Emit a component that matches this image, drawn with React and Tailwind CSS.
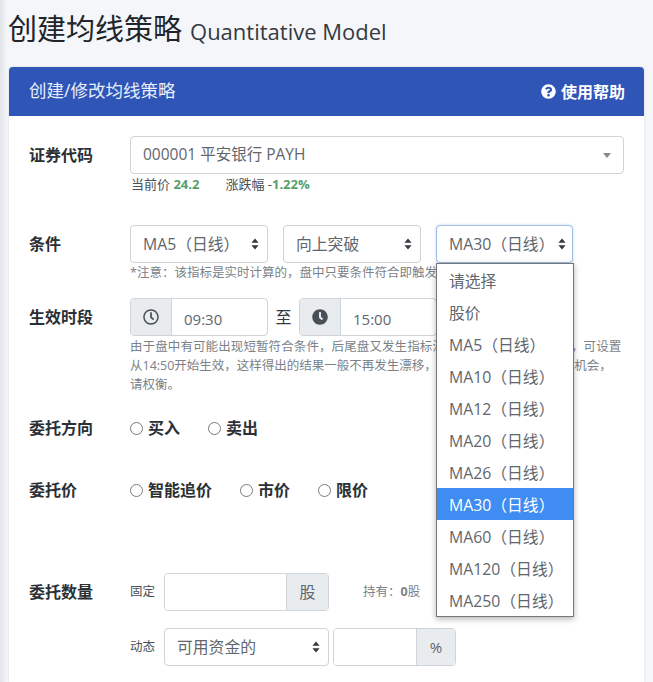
import React from "react";
import { FaRegClock, FaClock, FaQuestionCircle } from "react-icons/fa";

function Sort() {
  return (
    <svg width="8" height="12" viewBox="0 0 8 12" className="shrink-0">
      <path d="M4 0.5 L7.6 4.8 H0.4 Z M4 11.5 L7.6 7.2 H0.4 Z" fill="#343a40" />
    </svg>
  );
}
function Select({ className = "", children, focus }) {
  return (
    <div className={`h-[38px] flex items-center justify-between bg-white rounded-[4px] border text-[15.8px] text-[#5f666d] ${focus ? "border-[#9dbde8] shadow-[0_0_3px_rgba(90,150,230,0.35)] pl-3 pr-[6px]" : "border-[#ced4da] pl-3 pr-[8px]"} ${className}`}>
      <span className="whitespace-nowrap pt-[1px]">{children}</span>
      <Sort />
    </div>
  );
}
function Radio({ children, className = "" }) {
  return (
    <label className={`flex items-center text-[16px] font-bold text-[#2b3035] ${className}`}>
      <span className="w-[13px] h-[13px] rounded-full border border-[#7a7a7a] bg-white mr-[5px]" />
      <span>{children}</span>
    </label>
  );
}
function Label({ children, className = "" }) {
  return <div className={`w-[101px] shrink-0 text-[16px] font-bold text-[#2b3035] ${className}`}>{children}</div>;
}
const opts = ["请选择", "股价", "MA5（日线）", "MA10（日线）", "MA12（日线）", "MA20（日线）", "MA26（日线）", "MA30（日线）", "MA60（日线）", "MA120（日线）", "MA250（日线）"];

export default function App() {
  return (
    <div className="relative w-[653px] h-[682px] overflow-hidden bg-[linear-gradient(to_right,#e3e5e8_0px,#e8eaed_3px,#f4f6f9_7px)] pl-[9px] pr-[9px]" style={{ fontFamily: '"Open Sans","Noto Sans CJK SC",sans-serif' }}>
      <div className="h-[67px] flex items-baseline pt-[6px] text-[#212529] -ml-[1px] whitespace-nowrap">
        <span className="text-[29px] leading-[46px]">创建均线策略</span>
        <span className="text-[22px] ml-[8px] text-[#343a40]">Quantitative Model</span>
      </div>
      <div className="bg-white rounded-t-[4px] h-[615px] shadow-[0_0_2px_rgba(0,0,0,0.15)]">
        <div className="h-[49px] bg-[#2f55b7] rounded-t-[4px] flex items-center justify-between pl-[20px] pr-[19px] text-white">
          <span className="text-[17.5px] -mt-[3px] text-[#e8eefa]">创建/修改均线策略</span>
          <span className="flex items-center gap-[5px] text-[16px] font-bold">
            <FaQuestionCircle className="w-[15px] h-[15px]" />使用帮助
          </span>
        </div>
        <div className="pt-[20px] pl-[20px] pr-[20px]">
          <div className="flex items-start">
            <Label className="leading-[38px]">证券代码</Label>
            <div className="flex-1">
              <div className="h-[38px] flex items-center justify-between border border-[#ced4da] rounded-[4px] pl-3 pr-[12px] text-[15.5px] text-[#5f666d]">
                <span>000001 平安银行 PAYH</span>
                <span className="w-0 h-0 border-l-[4px] border-r-[4px] border-t-[5px] border-l-transparent border-r-transparent border-t-[#888]" />
              </div>
              <div className="text-[13px] leading-[18px] mt-[1px] pl-[1px] text-[#495057] flex">
                <span>当前价 <b className="text-[#5a9e6a]">24.2</b></span>
                <span className="ml-[26px]">涨跌幅 -<b className="text-[#5a9e6a]">1.22%</b></span>
              </div>
            </div>
          </div>

          <div className="flex items-start mt-[32px]">
            <Label className="leading-[38px]">条件</Label>
            <div className="flex-1">
              <div className="flex gap-[15px]">
                <Select className="w-[138px]">MA5（日线）</Select>
                <Select className="w-[138px]">向上突破</Select>
                <Select className="w-[137px]" focus>MA30（日线）</Select>
              </div>
              <div className="text-[12.5px] leading-[18px] mt-[1px] text-[#7b8288] whitespace-nowrap">*注意：该指标是实时计算的，盘中只要条件符合即触发交易</div>
            </div>
          </div>

          <div className="flex items-start mt-[16px]">
            <Label className="leading-[38px]">生效时段</Label>
            <div className="flex-1">
              <div className="flex items-center">
                <div className="w-[138px] h-[38px] flex border border-[#ced4da] rounded-[4px] overflow-hidden">
                  <div className="w-[41px] bg-[#e9ecef] border-r border-[#ced4da] flex items-center justify-center"><FaRegClock className="w-4 h-4 text-[#495057]" /></div>
                  <div className="pl-[12px] leading-[40px] text-[15px] text-[#5f666d]">09:30</div>
                </div>
                <span className="w-[31px] text-center text-[16px] text-[#343a40]">至</span>
                <div className="w-[138px] h-[38px] flex border border-[#ced4da] rounded-[4px] overflow-hidden">
                  <div className="w-[41px] bg-[#e9ecef] border-r border-[#ced4da] flex items-center justify-center"><FaClock className="w-4 h-4 text-[#495057]" /></div>
                  <div className="pl-[12px] leading-[40px] text-[15px] text-[#5f666d]">15:00</div>
                </div>
              </div>
              <div className="text-[12.5px] leading-[19px] mt-[1px] text-[#7b8288]">
                <div className="whitespace-nowrap tracking-[0.1px]">由于盘中有可能出现短暂符合条件，后尾盘又发生指标漂移的情况，如不想漂移，可设置</div>
                <div className="whitespace-nowrap">从14:50开始生效，这样得出的结果一般不再发生漂移，但也有可能错过部分交易机会，</div>
                <div>请权衡。</div>
              </div>
            </div>
          </div>

          <div className="flex items-center mt-[22px] h-[24px]">
            <Label>委托方向</Label>
            <Radio className="mr-[28px]">买入</Radio>
            <Radio>卖出</Radio>
          </div>
          <div className="flex items-center mt-[38px] h-[24px]">
            <Label>委托价</Label>
            <Radio className="mr-[28px]">智能追价</Radio>
            <Radio className="mr-[28px]">市价</Radio>
            <Radio>限价</Radio>
          </div>

          <div className="flex items-center mt-[71px]">
            <Label>委托数量</Label>
            <span className="w-[34px] text-[12.5px] text-[#495057]">固定</span>
            <div className="w-[165px] h-[38px] flex border border-[#ced4da] rounded-[4px] overflow-hidden">
              <div className="flex-1 bg-white" />
              <div className="w-[42px] bg-[#e9ecef] border-l border-[#ced4da] flex items-center justify-center text-[16px] text-[#5f666d]">股</div>
            </div>
            <span className="ml-[34px] text-[12.5px] text-[#7b8288]">持有：<b>0</b>股</span>
          </div>
          <div className="flex items-center mt-[17px]">
            <div className="w-[101px] shrink-0" />
            <span className="w-[34px] text-[12.5px] text-[#495057]">动态</span>
            <Select className="w-[165px]">可用资金的</Select>
            <div className="ml-[4px] w-[123px] h-[38px] flex border border-[#ced4da] rounded-[4px] overflow-hidden">
              <div className="flex-1 bg-white" />
              <div className="w-[39px] bg-[#e9ecef] border-l border-[#ced4da] flex items-center justify-center text-[15px] text-[#5f666d]">%</div>
            </div>
          </div>
        </div>
      </div>

      <div className="absolute left-[436px] top-[263px] w-[138px] bg-white border border-[#767676] shadow-[0_2px_6px_rgba(0,0,0,0.3)]">
        {opts.map((o, i) => (
          <div key={o} className={`h-[32px] leading-[34px] pl-[12px] text-[15.8px] whitespace-nowrap ${i === 7 ? "bg-[#3f8cf3] text-white" : "text-[#5f666d]"}`}>{o}</div>
        ))}
      </div>
    </div>
  );
}
